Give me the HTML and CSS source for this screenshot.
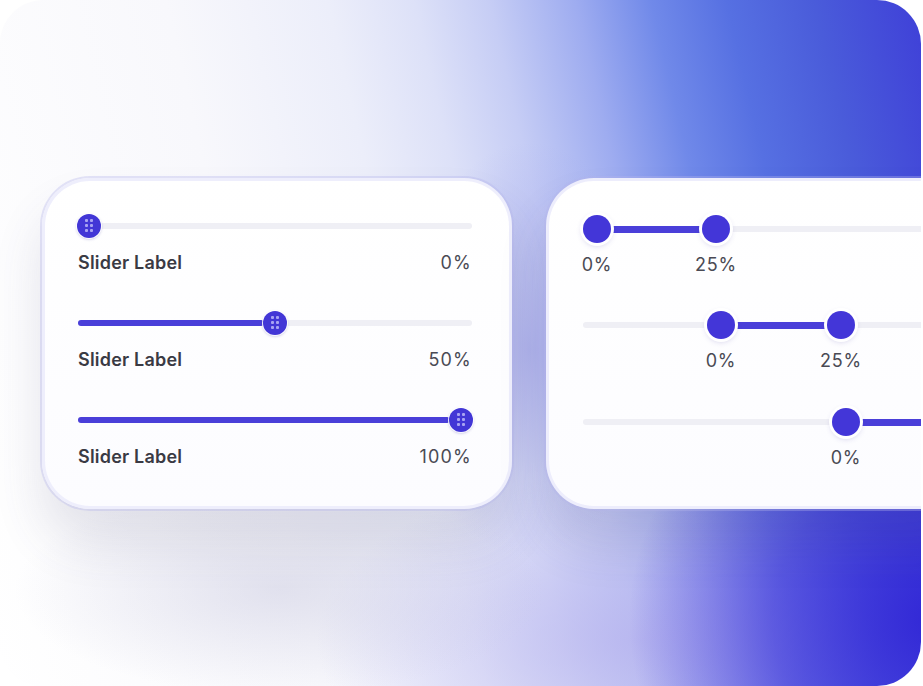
FILE: index.html
```html
<!DOCTYPE html>
<html>
<head>
<meta charset="utf-8">
<link rel="stylesheet" href="styles.css">
</head>
<body>
<div class="frame">
  <div class="card card-left">
    <div class="slider">
      <div class="track">
        <div class="fill" style="width:0%"></div>
        <div class="knob" style="left:0%"><span class="dots"><i></i><i></i><i></i><i></i><i></i><i></i></span></div>
      </div>
      <div class="meta"><span class="label">Slider Label</span><span class="value">0%</span></div>
    </div>
    <div class="slider">
      <div class="track">
        <div class="fill" style="width:50%"></div>
        <div class="knob" style="left:50%"><span class="dots"><i></i><i></i><i></i><i></i><i></i><i></i></span></div>
      </div>
      <div class="meta"><span class="label">Slider Label</span><span class="value">50%</span></div>
    </div>
    <div class="slider last">
      <div class="track">
        <div class="fill" style="width:100%"></div>
        <div class="knob" style="left:100%"><span class="dots"><i></i><i></i><i></i><i></i><i></i><i></i></span></div>
      </div>
      <div class="meta"><span class="label">Slider Label</span><span class="value">100%</span></div>
    </div>
  </div>
  <div class="card card-right">
    <div class="range">
      <div class="rtrack">
        <div class="rfill" style="left:14px;width:119px"></div>
        <div class="rknob" style="left:14px"></div>
        <div class="rknob" style="left:133px"></div>
        <span class="rlabel" style="left:14px">0%</span>
        <span class="rlabel" style="left:133px">25%</span>
      </div>
    </div>
    <div class="range">
      <div class="rtrack">
        <div class="rfill" style="left:138px;width:120px"></div>
        <div class="rknob" style="left:138px"></div>
        <div class="rknob" style="left:258px"></div>
        <span class="rlabel" style="left:138px">0%</span>
        <span class="rlabel" style="left:258px">25%</span>
      </div>
    </div>
    <div class="range">
      <div class="rtrack">
        <div class="rfill" style="left:263px;width:200px"></div>
        <div class="rknob" style="left:263px"></div>
        <span class="rlabel" style="left:263px">0%</span>
      </div>
    </div>
  </div>
</div>
</body>
</html>
```

FILE: styles.css
```css
html, body {
  margin: 0;
  padding: 0;
  background: #ffffff;
}
body {
  width: 923px;
  height: 686px;
  overflow: hidden;
  font-family: "Inter", "Noto Sans", sans-serif;
}
.frame {
  width: 921px;
  height: 686px;
  border-radius: 44px;
  overflow: hidden;
  display: flex;
  align-items: center;
  gap: 34px;
  padding-left: 42px;
  box-sizing: border-box;
  background:
    radial-gradient(ellipse 380px 150px at 280px 590px, rgba(196,196,220,0.45), rgba(196,196,220,0) 70%),
    radial-gradient(ellipse 160px 260px at 530px 350px, rgba(150,152,232,0.55), rgba(150,152,232,0) 80%),
    radial-gradient(ellipse 360px 330px at 935px 620px, rgba(48,36,214,0.95), rgba(56,44,216,0.6) 45%, rgba(56,44,216,0) 85%),
    radial-gradient(ellipse 380px 200px at 640px 640px, rgba(180,176,238,0.75), rgba(180,176,238,0) 85%),
    linear-gradient(77deg, #ffffff 0%, #f8f8fc 30%, #eceefa 45%, #dde1f8 53%, #c6cdf5 60%, #9eacf0 68%, #7089e9 75%, #5670e2 82%, #4a5cda 90%, #3f40d8 100%);
}
.card {
  flex: none;
  height: 331px;
  box-sizing: border-box;
  background: #ffffff;
  border-radius: 48px;
  border: 3px solid rgba(236, 236, 252, 0.9);
  box-shadow: 0 0 0 2px rgba(180, 180, 235, 0.35), 0 34px 50px rgba(70, 70, 110, 0.14);
}
.card-left {
  width: 470px;
  padding: 33px 37px 0 33px;
  background: linear-gradient(180deg, #ffffff 0%, #fcfcff 100%);
}
.slider {
  margin-bottom: 38px;
}
.slider.last { margin-bottom: 0; }
.track {
  position: relative;
  height: 24px;
  margin: 0 11px;
}
.track::before {
  content: "";
  position: absolute;
  left: -11px;
  right: -11px;
  top: 9px;
  height: 6px;
  border-radius: 3px;
  background: #efeff5;
}
.fill {
  position: absolute;
  left: -11px;
  top: 9px;
  height: 6px;
  border-radius: 3px;
  background: #4a3fd9;
}
.knob {
  position: absolute;
  top: 0;
  width: 24px;
  height: 24px;
  margin-left: -12px;
  border-radius: 50%;
  background: #4236d6;
  box-shadow: 0 0 0 1px rgba(255,255,255,0.9), 0 1px 3px rgba(40,30,150,0.35);
  display: flex;
  align-items: center;
  justify-content: center;
}
.dots {
  display: grid;
  grid-template-columns: 3px 3px;
  grid-auto-rows: 3px;
  gap: 2px;
}
.dots i {
  display: block;
  width: 3px;
  height: 3px;
  border-radius: 1px;
  background: #a8a3f2;
}
.meta {
  display: flex;
  justify-content: space-between;
  align-items: center;
  margin-top: 15px;
  height: 20px;
}
.label {
  font-weight: 600;
  font-size: 18px;
  letter-spacing: 0.2px;
  color: #3a3a44;
}
.value {
  font-size: 18px;
  color: #4a4a54;
  letter-spacing: 1.2px;
}
.card-right {
  width: 420px;
  padding: 33px 0 0 34px;
  border-top-right-radius: 0;
  border-bottom-right-radius: 0;
  border-right: none;
  background: linear-gradient(180deg, #ffffff 0%, #fcfcff 100%);
}
.range {
  height: 96px;
}
.range:nth-child(2) { height: 97px; }
.rtrack {
  position: relative;
  width: 420px;
  height: 30px;
}
.rtrack::before {
  content: "";
  position: absolute;
  left: 0;
  right: 0;
  top: 12px;
  height: 6px;
  border-radius: 3px;
  background: #efeff5;
}
.rfill {
  position: absolute;
  top: 12px;
  height: 7px;
  background: #4a3fd9;
}
.rknob {
  position: absolute;
  top: 1px;
  width: 28px;
  height: 28px;
  margin-left: -14px;
  box-sizing: border-box;
  border-radius: 50%;
  background: #4336d8;
  box-shadow: 0 0 0 3px #ffffff, 0 2px 6px rgba(60,50,160,0.3);
}
.rlabel {
  position: absolute;
  top: 40px;
  transform: translateX(-50%);
  font-size: 18px;
  color: #4a4a54;
  letter-spacing: 0.8px;
  white-space: nowrap;
}
```
